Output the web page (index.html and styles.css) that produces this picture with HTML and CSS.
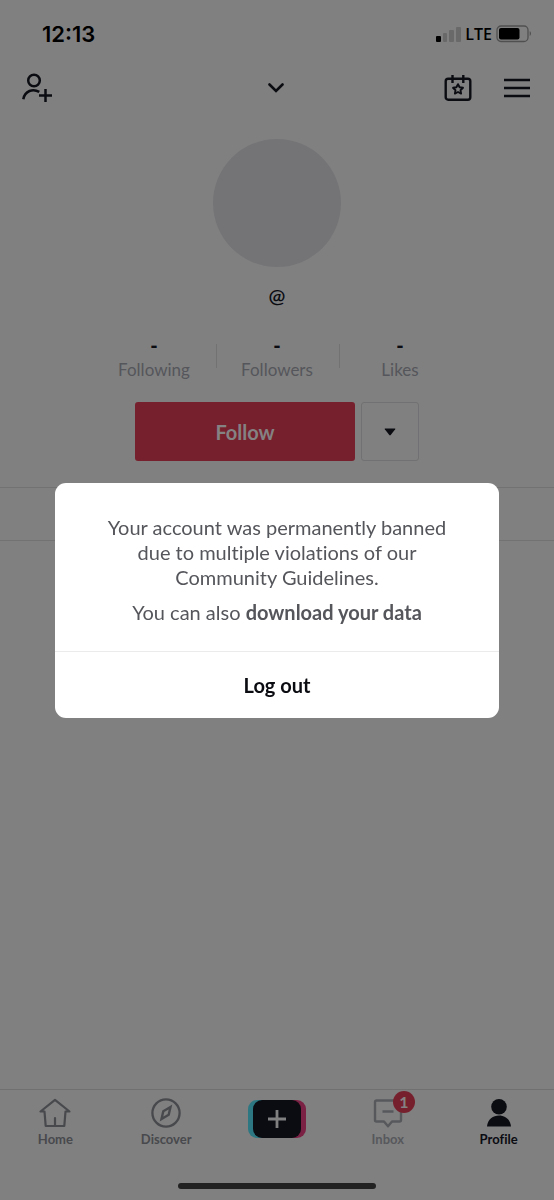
FILE: index.html
```html
<!DOCTYPE html>
<html lang="en">
<head>
<meta charset="utf-8">
<meta name="viewport" content="width=device-width, initial-scale=1">
<title>Profile</title>
<link rel="stylesheet" href="styles.css">
</head>
<body>
<div class="app">
  <div class="status">
    <span class="time">12:13</span>
    <div class="status-right">
      <svg class="signal" width="25" height="16" viewBox="0 0 25 16" aria-hidden="true">
        <rect x="0" y="10" width="5" height="6" rx="1" fill="#000"/>
        <g fill="#696969"><rect x="7" y="7" width="4" height="9" rx="1"/><rect x="13" y="4" width="5" height="12" rx="1"/><rect x="20" y="1" width="5" height="15" rx="1"/></g>
      </svg>
      <span class="network">LTE</span>
      <svg class="battery" width="36" height="18" viewBox="0 0 36 18" aria-hidden="true">
        <rect x="1" y="1" width="31" height="15.500" rx="4" fill="none" stroke="#505050" stroke-width="1.300"/>
        <rect x="3" y="3" width="20.500" height="11.500" rx="2" fill="#000"/>
        <path d="M33.700 6.300c1.700.5 1.700 4.100 0 4.600z" fill="#505050"/>
      </svg>
    </div>
  </div>
  <header class="header">
    <div class="header-side">
      <button class="icon-btn" aria-label="Add friends">
        <svg width="32" height="30" viewBox="0 0 32 30" fill="none" stroke="#0b0c12" stroke-width="2.500">
          <circle cx="12" cy="7.500" r="5.800"/><path d="M1.300 26.200c1.600-8.400 9.500-11 16-7.300M17 22.500h13M23.500 16v13"/>
        </svg>
      </button>
    </div>
    <button class="icon-btn" aria-label="Switch account">
      <svg width="16" height="10" viewBox="0 0 16 10" fill="none" stroke="#0b0c12" stroke-width="2.600"><path d="M1.500 1.500 8 8l6.500-6.500" stroke-linecap="round"/></svg>
    </button>
    <div class="header-side header-end">
      <button class="icon-btn" aria-label="Events">
        <svg width="28" height="28" viewBox="0 0 28 28" fill="none" stroke="#0b0c12" stroke-width="2.400" stroke-linejoin="round">
          <rect x="1.700" y="4.700" width="24.600" height="21" rx="2.500"/><path d="M8.500 1v8M19.300 1v8"/>
          <path d="m14 10.200 1.600 3.100 3.400.5-2.500 2.400.6 3.400-3.100-1.600-3.100 1.600.6-3.400-2.500-2.400 3.400-.5z" stroke-width="1.900"/>
        </svg>
      </button>
      <button class="icon-btn" aria-label="Menu">
        <svg width="26" height="20" viewBox="0 0 26 20" stroke="#0b0c12" stroke-width="2.500"><path d="M0 2h26M0 10h26M0 18h26"/></svg>
      </button>
    </div>
  </header>
  <main class="profile">
    <div class="avatar"></div>
    <p class="handle">@</p>
    <dl class="stats">
      <div class="stat"><dt>Following</dt><dd>-</dd></div>
      <div class="stat"><dt>Followers</dt><dd>-</dd></div>
      <div class="stat"><dt>Likes</dt><dd>-</dd></div>
    </dl>
    <div class="actions">
      <button class="follow">Follow</button>
      <button class="more" aria-label="More options">
        <svg width="12" height="8" viewBox="0 0 12 8"><path d="M1.200.5h9.600q1 0 .4.800L6.700 7.100q-.7.800-1.400 0L.8 1.300Q.2.500 1.200.5z" fill="#0b0c12"/></svg>
      </button>
    </div>
    <div class="tabs"></div>
  </main>
  <nav class="nav">
    <a class="nav-item" href="#home">
      <svg width="32" height="30" viewBox="0 0 32 30" fill="none" stroke="#48494d" stroke-width="2.200" stroke-linejoin="round" stroke-linecap="round"><path d="M16 1.800 1.500 13.500h4L6.700 28h18.600l1.200-14.500h4zM16 20v8"/></svg>
      Home
    </a>
    <a class="nav-item" href="#discover">
      <svg width="32" height="30" viewBox="0 0 32 30" fill="none" stroke="#48494d" stroke-width="2.300"><circle cx="16" cy="15" r="13.600"/><path d="m20.500 9-7.200 4.200-1.800 7.800 7.200-4.200z" stroke-width="2.400"/></svg>
      Discover
    </a>
    <a class="nav-item nav-create" href="#create" aria-label="Create">
      <svg width="58" height="38" viewBox="0 0 58 38"><rect x="0" y="0" width="48" height="38" rx="9" fill="#2c7781"/><rect x="10" y="0" width="48" height="38" rx="9" fill="#7b2143"/><rect x="5" y="0" width="48" height="38" rx="9" fill="#0b0c12"/><path d="M20 19h18M29 10v18" stroke="#808080" stroke-width="2.800"/></svg>
    </a>
    <a class="nav-item nav-inbox" href="#inbox">
      <span class="inbox-icon">
        <svg width="32" height="30" viewBox="0 0 32 30" fill="none" stroke="#57585c" stroke-width="2.400" stroke-linejoin="round"><path d="M4.500 2.500h23a1.500 1.500 0 0 1 1.500 1.500v18a1.500 1.500 0 0 1-1.500 1.500H20l-4 4.800-4-4.800H4.500A1.500 1.500 0 0 1 3 22V4a1.500 1.500 0 0 1 1.500-1.500zM10.500 13.500h11"/></svg>
        <span class="badge">1</span>
      </span>
      Inbox
    </a>
    <a class="nav-item nav-active" href="#profile" aria-current="page">
      <svg width="32" height="30" viewBox="0 0 32 30" fill="#0b0c12"><circle cx="16" cy="8.700" r="7.800"/><path d="M4 28.500c1-14.800 23-14.800 24 0z"/></svg>
      Profile
    </a>
  </nav>
  <div class="home-indicator"></div>
</div>
<div class="overlay">
  <section class="dialog" role="dialog" aria-modal="true" aria-label="Account banned">
    <div class="dialog-body">
      <p>Your account was permanently banned due to multiple violations of our Community Guidelines.</p>
      <p>You can also <a class="download" href="#data">download your data</a></p>
    </div>
    <button class="logout">Log out</button>
  </section>
</div>
</body>
</html>
```
FILE: styles.css
```css
* { box-sizing: border-box; }
body { margin: 0; background: #808080; color: #0b0c12; font-family: Lato, "Open Sans", sans-serif; font-variant-ligatures: none; }
button { font: inherit; color: inherit; background: none; border: 0; padding: 0; cursor: pointer; }
a { color: inherit; text-decoration: none; }
p, dl, dd { margin: 0; }
svg { display: block; }

.app { min-height: 100vh; display: flex; flex-direction: column; }

.status { display: flex; justify-content: space-between; align-items: center; padding: 22px 22px 0 42px; height: 46px; color: #000; }
.time { font: 600 22px/26px Inter, sans-serif; }
.status-right { display: flex; align-items: center; gap: 4px; }
.network { font: 600 16px/20px "Open Sans", sans-serif; }

.header { display: grid; grid-template-columns: 1fr auto 1fr; align-items: center; height: 84px; padding: 0 24px 0 22px; }
.header-side { display: flex; align-items: center; }
.header-end { justify-content: flex-end; gap: 32px; }

.profile { flex: 1; display: flex; flex-direction: column; align-items: center; padding-top: 9px; }
.avatar { width: 128px; height: 128px; border-radius: 50%; background: #747477; }
.handle { margin-top: 16px; font-size: 20px; line-height: 24px; font-weight: 600; }
.stats { display: flex; margin-top: 27px; }
.stat { position: relative; width: 123px; display: flex; flex-direction: column-reverse; align-items: center; gap: 2px; }
.stat + .stat::before { content: ""; position: absolute; left: 0; top: 10px; width: 1px; height: 24px; background: #727272; }
.stat dt { font-size: 17px; line-height: 24px; color: #55565b; }
.stat dd { font-size: 20px; line-height: 22px; font-weight: 900; }
.actions { display: flex; gap: 6px; margin-top: 20px; }
.follow { width: 220px; height: 59px; border-radius: 3px; background: #76202d; color: #858283; font-size: 20px; font-weight: 700; }
.more { display: grid; place-items: center; width: 58px; height: 59px; border: 1px solid #717173; border-radius: 3px; }
.tabs { align-self: stretch; height: 54px; margin-top: 26px; border: solid #727272; border-width: 1px 0; }

.nav { display: grid; grid-template-columns: repeat(5, 1fr); border-top: 1px solid #707070; padding-top: 8px; height: 94px; }
.nav-item { display: flex; flex-direction: column; align-items: center; gap: 2px; font-size: 13px; line-height: 18px; font-weight: 700; color: #48494d; }
.nav-create { padding-top: 2px; }
.nav-inbox { color: #57585c; }
.nav-active { color: #0b0c12; }
.inbox-icon { position: relative; }
.badge { position: absolute; left: 21px; top: -7px; width: 22px; height: 22px; border-radius: 50%; background: #76202d; color: #858283; font-size: 16px; line-height: 22px; text-align: center; }
.home-indicator { align-self: center; width: 198px; height: 6px; margin-bottom: 11px; border-radius: 3px; background: #222; }

.overlay { position: fixed; inset: 0; display: flex; align-items: center; justify-content: center; }
.dialog { width: 80%; background: #fff; border-radius: 11px; overflow: hidden; }
.dialog-body { display: flex; flex-direction: column; gap: 10px; padding: 32px 44px 26px; text-align: center; font-size: 20px; line-height: 25px; color: #55565b; }
.download { font-weight: 700; }
.logout { display: block; width: 100%; height: 67px; border-top: 1px solid #ebebec; font-size: 20px; font-weight: 700; }
```
